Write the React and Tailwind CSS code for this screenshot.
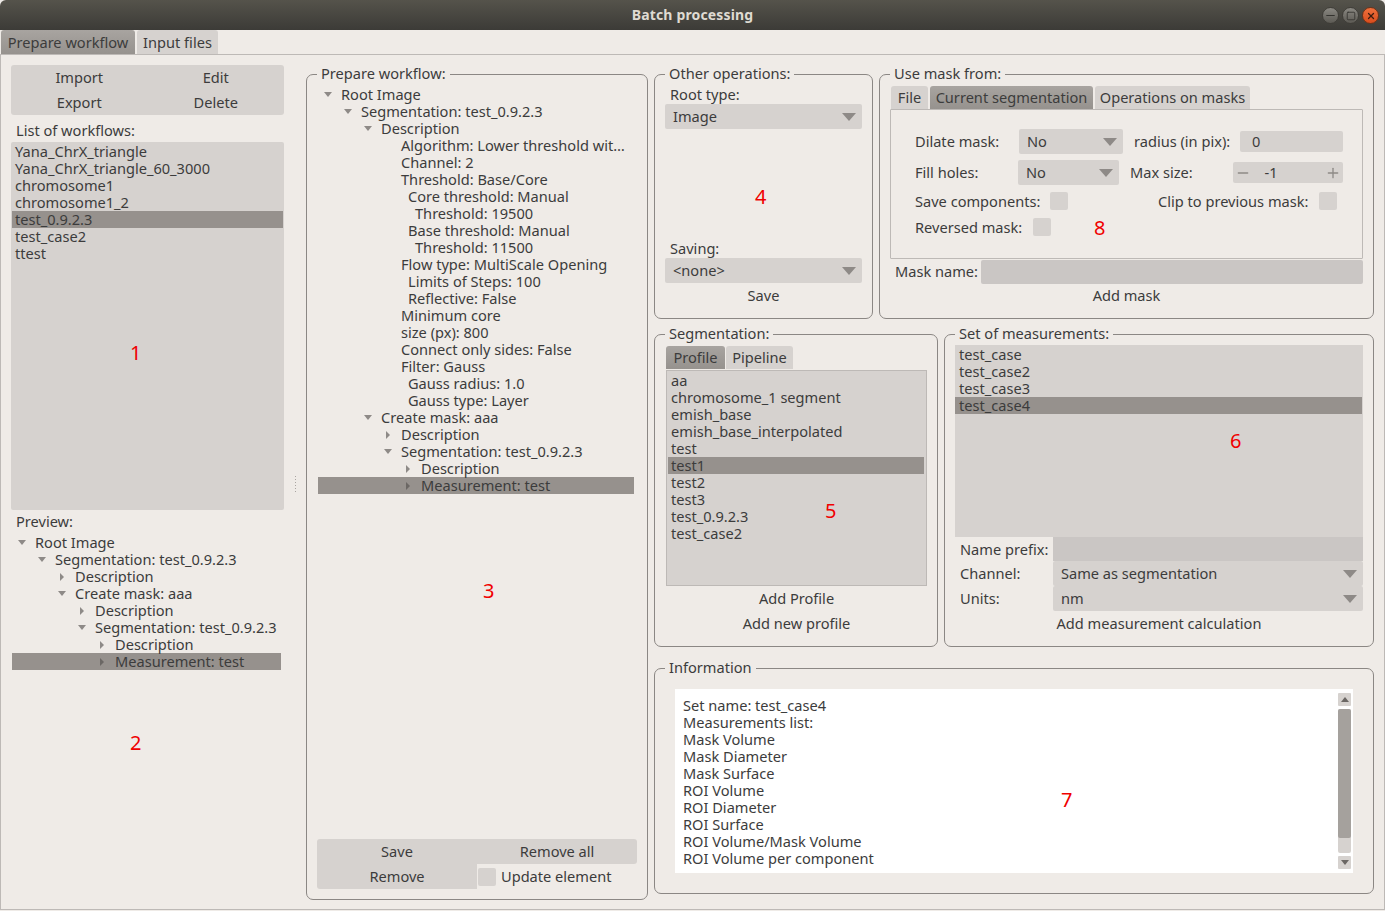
import { Minus, Plus, Square, X } from 'lucide-react';

const workflows = ['Yana_ChrX_triangle', 'Yana_ChrX_triangle_60_3000', 'chromosome1', 'chromosome1_2', 'test_0.9.2.3', 'test_case2', 'ttest'];
const profiles = ['aa', 'chromosome_1 segment', 'emish_base', 'emish_base_interpolated', 'test', 'test1', 'test2', 'test3', 'test_0.9.2.3', 'test_case2'];
const measurementSets = ['test_case', 'test_case2', 'test_case3', 'test_case4'];
const infoLines = ['Set name: test_case4', 'Measurements list:', 'Mask Volume', 'Mask Diameter', 'Mask Surface', 'ROI Volume', 'ROI Diameter', 'ROI Surface', 'ROI Volume/Mask Volume', 'ROI Volume per component'];

// [indent in px, text, arrow: open | closed | none, selected]
const previewTree = [
  [0, 'Root Image', 'open'],
  [20, 'Segmentation: test_0.9.2.3', 'open'],
  [40, 'Description', 'closed'],
  [40, 'Create mask: aaa', 'open'],
  [60, 'Description', 'closed'],
  [60, 'Segmentation: test_0.9.2.3', 'open'],
  [80, 'Description', 'closed'],
  [80, 'Measurement: test', 'closed', true],
];

const workflowTree = [
  [0, 'Root Image', 'open'],
  [20, 'Segmentation: test_0.9.2.3', 'open'],
  [40, 'Description', 'open'],
  [60, 'Algorithm: Lower threshold wit…', 'none'],
  [60, 'Channel: 2', 'none'],
  [60, 'Threshold: Base/Core', 'none'],
  [67, 'Core threshold: Manual', 'none'],
  [74, 'Threshold: 19500', 'none'],
  [67, 'Base threshold: Manual', 'none'],
  [74, 'Threshold: 11500', 'none'],
  [60, 'Flow type: MultiScale Opening', 'none'],
  [67, 'Limits of Steps: 100', 'none'],
  [67, 'Reflective: False', 'none'],
  [60, 'Minimum core', 'none'],
  [60, 'size (px): 800', 'none'],
  [60, 'Connect only sides: False', 'none'],
  [60, 'Filter: Gauss', 'none'],
  [67, 'Gauss radius: 1.0', 'none'],
  [67, 'Gauss type: Layer', 'none'],
  [40, 'Create mask: aaa', 'open'],
  [60, 'Description', 'closed'],
  [60, 'Segmentation: test_0.9.2.3', 'open'],
  [80, 'Description', 'closed'],
  [80, 'Measurement: test', 'closed', true],
];

const Group = ({ title, className, children }) => (
  <div className={`relative rounded-[7px] border border-[#8b8784] ${className}`}>
    <span className="absolute left-[10px] top-[-10px] h-[18px] bg-[#efebe7] px-[4px] leading-[17px]">{title}</span>
    {children}
  </div>
);

const Btn = ({ children, className = '' }) => (
  <div className={`flex h-[25px] items-center justify-center bg-[#d6d2cf] ${className}`}>{children}</div>
);

const Check = () => <div className="h-[18px] w-[18px] shrink-0 rounded-[2px] bg-[#d6d2cf]" />;

const Combo = ({ value, className = '' }) => (
  <div className={`flex h-[25px] items-center justify-between rounded-[2px] bg-[#d6d2cf] pl-[8px] pr-[6px] ${className}`}>
    <span>{value}</span>
    <span className="h-0 w-0 border-x-[7px] border-t-[8px] border-x-transparent border-t-[#8e8a87]" />
  </div>
);

const Tab = ({ active, children, className = '' }) => (
  <div className={`flex h-[23px] items-center justify-center whitespace-nowrap rounded-t-[3px] ${active ? 'bg-gradient-to-b from-[#a8a4a0] to-[#96928e]' : 'bg-[#d6d2cf]'} ${className}`}>
    {children}
  </div>
);

const Tree = ({ rows }) => (
  <div>
    {rows.map(([indent, text, arrow, selected], i) => (
      <div key={i} className={`flex h-[17px] items-center whitespace-nowrap ${selected ? 'bg-[#96918d]' : ''}`}>
        <div className="relative shrink-0" style={{ width: indent + 23 }}>
          {arrow === 'open' && (
            <span className="absolute top-[-3px] h-0 w-0 border-x-[4px] border-t-[5px] border-x-transparent border-t-[#8e8a87]" style={{ left: indent + 6 }} />
          )}
          {arrow === 'closed' && (
            <span className={`absolute top-[-4px] h-0 w-0 border-y-[4px] border-l-[4px] border-y-transparent ${selected ? 'border-l-[#6b6764]' : 'border-l-[#8e8a87]'}`} style={{ left: indent + 8 }} />
          )}
        </div>
        <span>{text}</span>
      </div>
    ))}
  </div>
);

const Row = ({ text, selected, className = 'pl-[3px]' }) => (
  <div className={`h-[17px] whitespace-nowrap ${selected ? 'bg-[#96918d]' : ''} ${className}`}>{text}</div>
);

const Marker = ({ className, children }) => (
  <span className={`absolute text-[20px] leading-[24px] text-[#f00000] ${className}`}>{children}</span>
);

const TitleBar = () => (
  <div className="relative flex h-[30px] shrink-0 items-center justify-center rounded-t-[6px] bg-gradient-to-b from-[#55534b] to-[#3c3b37] pb-[2px]">
    <span className="text-[14px] font-bold tracking-[0.15px] text-[#dfdbd2]">Batch processing</span>
    <div className="absolute right-[6px] top-[7px] flex gap-[3px]">
      <div className="flex h-[17px] w-[17px] items-center justify-center rounded-full border border-[#3f3d38] bg-gradient-to-b from-[#8a8882] to-[#5c5a54] text-[#34332f]"><Minus size={13} strokeWidth={2} /></div>
      <div className="flex h-[17px] w-[17px] items-center justify-center rounded-full border border-[#3f3d38] bg-gradient-to-b from-[#8a8882] to-[#5c5a54] text-[#34332f]"><Square size={10} strokeWidth={2} /></div>
      <div className="flex h-[17px] w-[17px] items-center justify-center rounded-full border border-[#6e3218] bg-gradient-to-b from-[#f0703c] to-[#d84c1c] text-[#3c1c10]"><X size={10} strokeWidth={3} /></div>
    </div>
  </div>
);

const LeftColumn = () => (
  <div className="relative flex h-full w-[273px] shrink-0 flex-col">
    <div className="grid grid-cols-2">
      <Btn className="rounded-tl-[3px]">Import</Btn>
      <Btn className="rounded-tr-[3px]">Edit</Btn>
      <Btn className="rounded-bl-[3px]">Export</Btn>
      <Btn className="rounded-br-[3px]">Delete</Btn>
    </div>
    <div className="flex h-[27px] items-center pl-[5px] pt-[3px]">List of workflows:</div>
    <div className="relative h-[368px] rounded-[2px] bg-[#d6d2cf] pl-[1px] pr-[1px] pt-[1px]">
      {workflows.map((w) => <Row key={w} text={w} selected={w === 'test_0.9.2.3'} />)}
      <Marker className="left-[119px] top-[199px]">1</Marker>
    </div>
    <div className="flex h-[24px] items-center pb-[2px] pl-[5px]">Preview:</div>
    <div className="relative ml-[1px] w-[269px]">
      <Tree rows={previewTree} />
      <Marker className="left-[118px] top-[197px]">2</Marker>
    </div>
    <div className="absolute left-[284px] top-[411px] flex flex-col gap-[2px]">
      {[0, 1, 2, 3, 4, 5].map((d) => <span key={d} className="h-px w-px bg-[#a9a5a1]" />)}
    </div>
  </div>
);

const MiddleGroup = () => (
  <Group title="Prepare workflow:" className="flex h-[826px] w-[342px] shrink-0 flex-col">
    <div className="relative ml-[11px] mr-[13px] mt-[11px] flex-1">
      <Tree rows={workflowTree} />
      <Marker className="left-[165px] top-[493px]">3</Marker>
    </div>
    <div className="mb-[10px] ml-[10px] mr-[10px] grid grid-cols-2">
      <Btn className="rounded-tl-[3px]">Save</Btn>
      <Btn className="rounded-r-[3px]">Remove all</Btn>
      <Btn className="rounded-bl-[3px]">Remove</Btn>
      <div className="ml-[1px] flex h-[25px] items-center gap-[5px]"><Check /><span>Update element</span></div>
    </div>
  </Group>
);

const OtherOperations = () => (
  <Group title="Other operations:" className="relative flex h-[245px] w-[219px] shrink-0 flex-col px-[10px] pt-[11px]">
    <div className="h-[18px] pl-[5px]">Root type:</div>
    <Combo value="Image" />
    <Marker className="left-[100px] top-[110px]">4</Marker>
    <div className="mt-[111px] h-[18px] pl-[5px]">Saving:</div>
    <Combo value="<none>" />
    <div className="flex h-[25px] items-center justify-center">Save</div>
  </Group>
);

const UseMask = () => (
  <Group title="Use mask from:" className="flex h-[245px] flex-1 flex-col pl-[10px] pr-[10px] pt-[11px]">
    <div className="flex gap-[2px] pl-[1px]">
      <Tab className="w-[37px]">File</Tab>
      <Tab active className="w-[163px]">Current segmentation</Tab>
      <Tab className="w-[155px]">Operations on masks</Tab>
    </div>
    <div className="relative h-[150px] rounded-[1px] border border-[#bdb9b6] pl-[24px] pt-[19px]">
      <div className="flex h-[25px] items-center">
        <span className="w-[104px]">Dilate mask:</span>
        <Combo value="No" className="w-[104px]" />
        <span className="ml-[11px] w-[106px]">radius (in pix):</span>
        <div className="flex h-[21px] w-[103px] items-center rounded-[2px] bg-[#d6d2cf] pl-[12px]">0</div>
      </div>
      <div className="mt-[6px] flex h-[25px] items-center">
        <span className="w-[103px]">Fill holes:</span>
        <Combo value="No" className="w-[101px]" />
        <span className="ml-[11px] w-[103px]">Max size:</span>
        <div className="flex h-[21px] w-[110px] items-center justify-between rounded-[2px] bg-[#d6d2cf] px-[2px] text-[#8e8a87]">
          <Minus size={16} />
          <span className="mr-[34px] text-[#3c3c3c]">-1</span>
          <Plus size={16} />
        </div>
      </div>
      <div className="mt-[7px] flex h-[18px] items-center">
        <span className="w-[135px]">Save components:</span>
        <Check />
        <span className="ml-[90px] w-[161px]">Clip to previous mask:</span>
        <Check />
      </div>
      <div className="mt-[8px] flex h-[18px] items-center">
        <span className="w-[118px]">Reversed mask:</span>
        <Check />
      </div>
      <Marker className="left-[203px] top-[106px]">8</Marker>
    </div>
    <div className="flex h-[25px] items-center">
      <span className="w-[91px] pl-[5px]">Mask name:</span>
      <div className="h-[24px] flex-1 rounded-[2px] bg-[#cac6c4]" />
    </div>
    <div className="flex h-[22px] items-center justify-center">Add mask</div>
  </Group>
);

const Segmentation = () => (
  <Group title="Segmentation:" className="flex h-[313px] w-[284px] shrink-0 flex-col pl-[11px] pr-[10px] pt-[11px]">
    <div className="flex gap-[1px]">
      <Tab active className="w-[59px]">Profile</Tab>
      <Tab className="w-[67px]">Pipeline</Tab>
    </div>
    <div className="relative mt-[1px] h-[216px] border border-[#bdb9b6] bg-[#d6d2cf] pl-[1px] pr-[2px] pt-[1px]">
      {profiles.map((p) => <Row key={p} text={p} selected={p === 'test1'} />)}
      <Marker className="left-[158px] top-[128px]">5</Marker>
    </div>
    <div className="flex h-[25px] items-center justify-center">Add Profile</div>
    <div className="flex h-[25px] items-center justify-center">Add new profile</div>
  </Group>
);

const Measurements = () => (
  <Group title="Set of measurements:" className="flex h-[313px] flex-1 flex-col pl-[10px] pr-[10px] pt-[10px]">
    <div className="relative h-[192px] bg-[#d6d2cf] pr-[1px] pt-[1px]">
      {measurementSets.map((m) => <Row key={m} text={m} selected={m === 'test_case4'} className="pl-[4px]" />)}
      <Marker className="left-[275px] top-[84px]">6</Marker>
    </div>
    <div className="flex h-[24px] items-center">
      <span className="w-[98px] pl-[5px]">Name prefix:</span>
      <div className="h-[24px] flex-1 bg-[#cac6c4]" />
    </div>
    <div className="flex h-[25px] items-center">
      <span className="w-[98px] pl-[5px]">Channel:</span>
      <Combo value="Same as segmentation" className="flex-1" />
    </div>
    <div className="flex h-[25px] items-center">
      <span className="w-[98px] pl-[5px]">Units:</span>
      <Combo value="nm" className="flex-1" />
    </div>
    <div className="flex h-[25px] items-center justify-center">Add measurement calculation</div>
  </Group>
);

const Information = () => (
  <Group title="Information" className="h-[226px] px-[20px] pt-[20px]">
    <div className="relative flex h-[184px] w-[678px] bg-white">
      <div className="flex-1 pl-[8px] pt-[8px]">
        {infoLines.map((l) => <div key={l} className="h-[17px]">{l}</div>)}
      </div>
      <Marker className="left-[386px] top-[99px]">7</Marker>
      <div className="mr-[2px] mt-[4px] flex h-[176px] w-[13px] flex-col gap-[3px]">
        <div className="flex h-[13px] items-center justify-center rounded-[1px] bg-[#d6d2cf]">
          <span className="h-0 w-0 border-x-[4px] border-b-[5px] border-x-transparent border-b-[#6b6764]" />
        </div>
        <div className="h-[144px] rounded-[2px] bg-[#d6d2cf]">
          <div className="h-[129px] rounded-[2px] bg-[#a5a19d]" />
        </div>
        <div className="flex h-[13px] items-center justify-center rounded-[1px] bg-[#d6d2cf]">
          <span className="h-0 w-0 border-x-[4px] border-t-[5px] border-x-transparent border-t-[#6b6764]" />
        </div>
      </div>
    </div>
  </Group>
);

export default function App() {
  return (
    <div className="flex h-[911px] w-[1385px] flex-col overflow-hidden bg-[#efebe7] font-['Noto_Sans',sans-serif] text-[14.6px] leading-[17px] text-[#3c3c3c]">
      <TitleBar />
      <div className="flex h-[25px] shrink-0 items-end gap-[2px] border-b border-[#bdb9b6] pl-[1px]">
        <Tab active className="h-[24px] w-[134px]">Prepare workflow</Tab>
        <Tab className="h-[24px] w-[81px]">Input files</Tab>
      </div>
      <div className="flex h-[855px] shrink-0 border-b border-l border-r border-[#bdb9b6] pl-[10px] pt-[10px]">
        <LeftColumn />
        <div className="ml-[22px] mt-[9px] flex">
          <MiddleGroup />
        </div>
        <div className="ml-[6px] mt-[9px] flex w-[720px] flex-col">
          <div className="flex gap-[6px]">
            <OtherOperations />
            <UseMask />
          </div>
          <div className="mt-[15px] flex gap-[6px]">
            <Segmentation />
            <Measurements />
          </div>
          <div className="mt-[21px]">
            <Information />
          </div>
        </div>
      </div>
    </div>
  );
}
